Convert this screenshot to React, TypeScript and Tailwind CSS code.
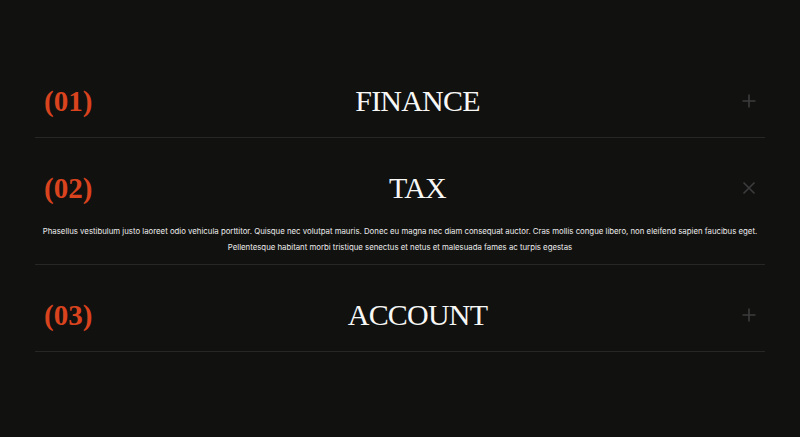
import React from "react";

const items = [
  { num: "(01)", title: "FINANCE", open: false },
  { num: "(02)", title: "TAX", open: true },
  { num: "(03)", title: "ACCOUNT", open: false },
];

function Plus() {
  return (
    <svg width="14" height="14" viewBox="0 0 14 14" fill="none">
      <path d="M7 0.5V13.5M0.5 7H13.5" stroke="#3c3c3c" strokeWidth="1.6" />
    </svg>
  );
}

function Close() {
  return (
    <svg width="14" height="14" viewBox="0 0 14 14" fill="none">
      <path d="M1.5 1.5L12.5 12.5M12.5 1.5L1.5 12.5" stroke="#3c3c3c" strokeWidth="1.6" />
    </svg>
  );
}

export default function App() {
  return (
    <div className="h-[437px] w-full bg-[#111110] px-[35px] pt-[51px]">
      {items.map((it) => (
        <div key={it.num} className="border-b border-[#272726]">
          <div className="mt-[30px] mb-[16px] flex h-[40px] items-center px-[9px]">
            <div
              className="w-[49px] text-[29px] font-bold leading-none text-[#d9431e]"
              style={{ fontFamily: '"Liberation Serif", serif' }}
            >
              {it.num}
            </div>
            <div
              className="flex-1 text-center text-[30px] leading-none tracking-[-0.8px] text-[#f7f7f5]"
              style={{ fontFamily: '"Liberation Serif", serif' }}
            >
              {it.title}
            </div>
            <div className="flex w-[14px] items-center justify-center">
              {it.open ? <Close /> : <Plus />}
            </div>
          </div>
          {it.open && (
            <p
              className="-mt-[1px] whitespace-nowrap pb-[9px] text-center text-[7.8px] leading-[16px] text-[#ececec]"
              style={{ fontFamily: 'Inter, "Liberation Sans", sans-serif' }}
            >
              Phasellus vestibulum justo laoreet odio vehicula porttitor. Quisque nec volutpat mauris. Donec eu magna nec diam consequat auctor. Cras mollis congue libero, non eleifend sapien faucibus eget.
              <br />
              Pellentesque habitant morbi tristique senectus et netus et malesuada fames ac turpis egestas
            </p>
          )}
        </div>
      ))}
    </div>
  );
}
